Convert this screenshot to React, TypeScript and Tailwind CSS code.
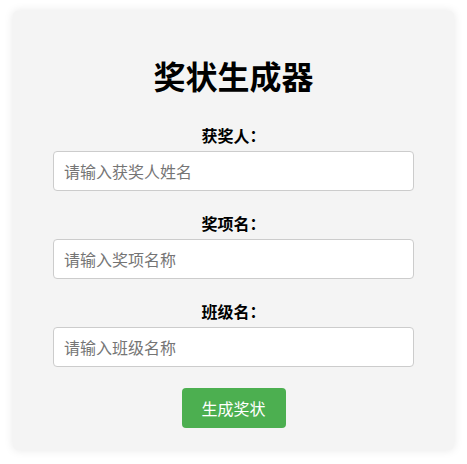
import React from "react";

const fields = [
  { label: "获奖人：", placeholder: "请输入获奖人姓名" },
  { label: "奖项名：", placeholder: "请输入奖项名称" },
  { label: "班级名：", placeholder: "请输入班级名称" },
];

export default function App() {
  return (
    <div
      className="min-h-[464px] w-[467px] bg-white pt-[11px] pl-[13px]"
      style={{ fontFamily: '"Noto Sans CJK SC", "Noto Sans", sans-serif' }}
    >
      <div className="flex h-[439px] w-[441px] flex-col rounded-[5px] bg-[#f4f4f4] px-[40px] pt-[45px] shadow-[0_0_10px_rgba(0,0,0,0.1)]">
        <h1 className="text-center text-[32px] font-bold leading-[38px] text-black">奖状生成器</h1>
        <div className="mt-[30px] flex flex-col gap-[21px]">
          {fields.map((f) => (
            <div key={f.label} className="flex flex-col">
              <label className="text-center text-[16px] font-bold leading-[22px] text-black">{f.label}</label>
              <input
                type="text"
                placeholder={f.placeholder}
                className="mt-[5px] h-[40px] w-full rounded-[4px] border border-[#cccccc] bg-white px-[10px] text-[16px] text-black outline-none placeholder:text-[#757575]"
              />
            </div>
          ))}
        </div>
        <div className="mt-[21px] flex justify-center">
          <button className="h-[40px] w-[104px] rounded-[4px] bg-[#4caf50] text-[16px] text-white">生成奖状</button>
        </div>
      </div>
    </div>
  );
}
